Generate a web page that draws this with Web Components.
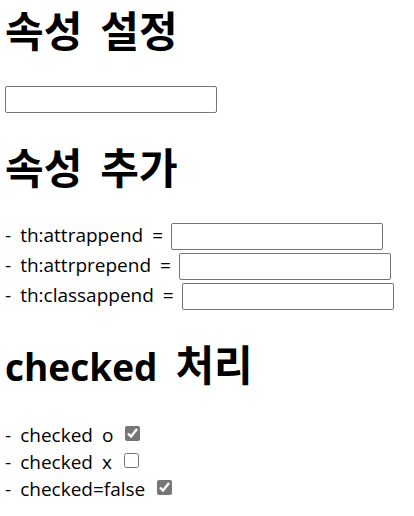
<!DOCTYPE html>
<html lang="ko">
<head>
<meta charset="utf-8">
<title>속성 설정</title>
<style>
body { margin: 0; background: #fff; color: #000; font: 19px/27px "Open Sans", "Noto Sans CJK KR", sans-serif; }
</style>
</head>
<body>
<attribute-page></attribute-page>
<script>
const define = (name, html, setup) => customElements.define(name, class extends HTMLElement {
  connectedCallback() {
    if (this.shadowRoot) return;
    const root = this.attachShadow({ mode: 'open' });
    root.innerHTML = html;
    if (setup) setup(this, root);
  }
});

// Fills an element with one span per word, so that the gap between words is a layout gap.
const setWords = (element, text) => {
  text.split(' ').forEach((word, i) => {
    if (i) element.append(' ');
    const span = document.createElement('span');
    span.textContent = word;
    if (/[가-힣]/.test(word)) span.className = 'hangul';
    element.append(span);
  });
};

define('page-section', `
<style>
:host { display: block; }
h1 { display: flex; align-items: baseline; gap: 18px; margin: 0 0 28px; font-size: 37px; line-height: 54px; font-weight: 700; white-space: nowrap; }
.hangul { font-size: 42px; }
.rows { display: flex; flex-direction: column; gap: var(--row-gap, 0px); }
</style>
<h1></h1>
<div class="rows"><slot></slot></div>`, (host, root) => {
  setWords(root.querySelector('h1'), host.getAttribute('heading'));
});

define('text-field', `
<style>
:host { display: flex; align-items: flex-start; gap: 8px; }
label { display: flex; gap: 9px; line-height: 24px; white-space: nowrap; }
label:empty { display: none; }
input { box-sizing: border-box; flex: 0 1 212px; min-width: 0; height: 27px; margin: 0; padding: 1px 2px; border: 1px solid #767676; border-radius: 2px; background: #fff; font: inherit; }
</style>
<label for="field"></label><input id="field" type="text">`, (host, root) => {
  const text = host.getAttribute('label');
  if (text) setWords(root.querySelector('label'), text);
  else root.querySelector('input').setAttribute('aria-label', '속성 설정');
});

define('check-field', `
<style>
:host { display: flex; align-items: center; gap: 12px; }
label { display: flex; gap: 9px; line-height: 27px; white-space: nowrap; }
input { width: 15px; height: 15px; margin: 0 0 4px; accent-color: #767676; }
</style>
<label for="box"></label><input id="box" type="checkbox">`, (host, root) => {
  setWords(root.querySelector('label'), host.getAttribute('label'));
  root.querySelector('input').checked = host.hasAttribute('checked');
});

define('attribute-page', `
<style>
:host { display: flex; flex-direction: column; gap: 28px; padding: 4px 5px 13px; }
.fields { --row-gap: 3px; }
</style>
<page-section heading="속성 설정"><text-field></text-field></page-section>
<page-section heading="속성 추가" class="fields">
<text-field label="- th:attrappend ="></text-field>
<text-field label="- th:attrprepend ="></text-field>
<text-field label="- th:classappend ="></text-field>
</page-section>
<page-section heading="checked 처리">
<check-field label="- checked o" checked></check-field>
<check-field label="- checked x"></check-field>
<check-field label="- checked=false" checked></check-field>
</page-section>`);
</script>
</body>
</html>
